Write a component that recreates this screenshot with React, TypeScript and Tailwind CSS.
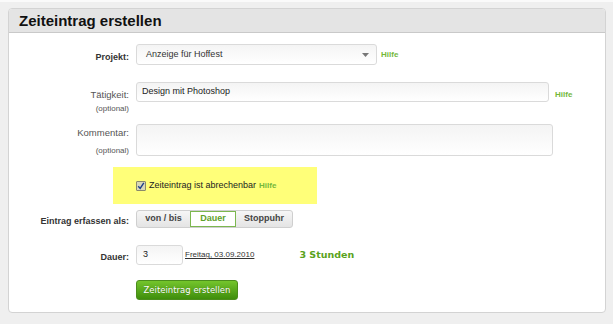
const sans = { fontFamily: '"Liberation Sans", Arial, sans-serif' };
const verdana = { fontFamily: '"DejaVu Sans", Verdana, sans-serif' };

function Hilfe({ className = "" }: { className?: string }) {
  return (
    <a className={`text-[8px] font-bold text-[#74b83a] ${className}`}>Hilfe</a>
  );
}

function Label({ children, bold = false }: { children: React.ReactNode; bold?: boolean }) {
  return (
    <span className={`text-[9.5px] leading-[12px] ${bold ? "font-bold text-[#333] text-[9px]" : "text-[#555]"}`}>
      {children}
    </span>
  );
}

const field =
  "rounded-[3px] border border-[#dadada] bg-gradient-to-b from-[#f4f4f4] to-white";

export default function App() {
  return (
    <div className="min-h-[324px] w-[613px] bg-[#efefef]" style={sans}>
      <div className="h-[2px] bg-[#fafafa]" />
      <div className="px-[8px] pt-[6px]">
        <div className="w-[598px] overflow-hidden rounded-[4px] border border-[#d3d3d3] bg-white">
          <div className="flex h-[24px] items-center border-b border-[#c9c9c9] bg-[#e4e4e4] pl-[10px]">
            <h1 className="text-[15px] font-bold leading-none text-[#111]">Zeiteintrag erstellen</h1>
          </div>

          <div className="pb-[12px]">
            {/* Projekt */}
            <div className="mt-[11px] flex h-[21px] items-center">
              <div className="w-[120px] text-right">
                <Label bold>Projekt:</Label>
              </div>
              <div className={`ml-[7px] flex h-[21px] w-[241px] items-center justify-between pl-[9px] pr-[7px] ${field}`}>
                <span className="text-[9px] text-[#333]">Anzeige für Hoffest</span>
                <svg width="7" height="4" viewBox="0 0 7 4">
                  <path d="M0 0h7L3.5 4z" fill="#777" />
                </svg>
              </div>
              <Hilfe className="ml-[4px]" />
            </div>

            {/* Tätigkeit */}
            <div className="mt-[17px] flex h-[42px] items-start">
              <div className="flex w-[120px] flex-col items-end pt-[7px]">
                <Label>Tätigkeit:</Label>
                <span className="mt-[2px] text-[8px] leading-[12px] text-[#555]">(optional)</span>
              </div>
              <div className={`ml-[7px] flex h-[20px] w-[413px] items-center pl-[5px] ${field}`}>
                <span className="text-[9px] text-[#222]">Design mit Photoshop</span>
              </div>
              <Hilfe className="ml-[6px] mt-[7px]" />
            </div>

            {/* Kommentar */}
            <div className="flex h-[43px] items-start">
              <div className="flex w-[120px] flex-col items-end pt-[3px]">
                <Label>Kommentar:</Label>
                <span className="mt-[6px] text-[8px] leading-[12px] text-[#555]">(optional)</span>
              </div>
              <div className={`ml-[7px] h-[32px] w-[417px] ${field}`} />
            </div>

            {/* Abrechenbar */}
            <div className="ml-[104px] flex h-[37px] w-[204px] items-center bg-[#ffff79] pl-[23px]">
              <span className="flex h-[10px] w-[10px] items-center justify-center rounded-[1px] border border-[#8a8a6a] bg-[#d8d8b8]">
                <svg width="8" height="8" viewBox="0 0 8 8">
                  <path d="M1.2 4.2 3.2 6.4 6.8 0.8" fill="none" stroke="#1d3f8a" strokeWidth="1.4" />
                </svg>
              </span>
              <span className="ml-[3px] text-[9px] text-[#222]">Zeiteintrag ist abrechenbar</span>
              <Hilfe className="ml-[3px]" />
            </div>

            {/* Eintrag erfassen als */}
            <div className="mt-[6px] flex h-[18px] items-center">
              <div className="w-[120px] text-right">
                <Label bold>Eintrag erfassen als:</Label>
              </div>
              <div className="ml-[7px] flex h-[18px] overflow-hidden rounded-[3px] border border-[#cfcfcf] bg-gradient-to-b from-[#f6f6f6] to-[#e4e4e4] text-[9px] font-bold text-[#444]">
                <span className="flex w-[53px] items-center justify-center">von / bis</span>
                <span className="flex w-[46px] items-center justify-center border border-[#7cb74f] bg-white text-[#5ea12a]">Dauer</span>
                <span className="flex w-[56px] items-center justify-center">Stoppuhr</span>
              </div>
            </div>

            {/* Dauer */}
            <div className="mt-[17px] flex h-[20px] items-center">
              <div className="w-[120px] text-right">
                <Label bold>Dauer:</Label>
              </div>
              <div className={`ml-[7px] flex h-[20px] w-[47px] items-center pl-[6px] ${field}`}>
                <span className="text-[9px] text-[#222]">3</span>
              </div>
              <a className="ml-[2px] text-[8px] text-[#333] underline">Freitag, 03.09.2010</a>
              <span className="ml-[45px] text-[9.5px] font-bold text-[#5aa21c]" style={verdana}>3 Stunden</span>
            </div>

            {/* Submit */}
            <div className="mt-[15px] flex">
              <button
                className="ml-[127px] flex h-[20px] w-[102px] items-center justify-center rounded-[3px] border border-[#4b8d1c] bg-gradient-to-b from-[#74c52c] to-[#3f8e0b] text-[8.5px] font-normal text-white [text-shadow:0_0_1px_rgba(0,0,0,0.35)]"
                style={verdana}
              >
                Zeiteintrag erstellen
              </button>
            </div>
          </div>
        </div>
      </div>
    </div>
  );
}
